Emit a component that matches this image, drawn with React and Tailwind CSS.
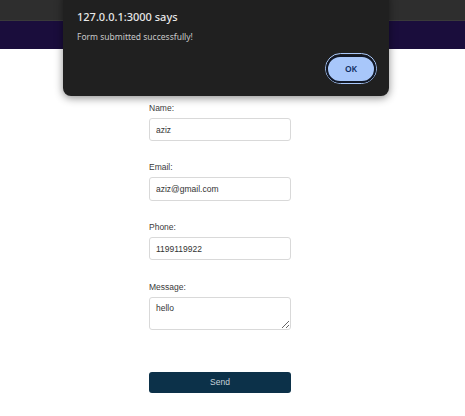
export default function App() {
  const label = "block text-[8.5px] leading-[12px] text-[#3a3a3a] mb-[4px]";
  const input =
    "block w-[142px] h-[23px] rounded-[3px] border border-[#d9d9d9] bg-white px-[6px] text-[8.5px] text-[#333] outline-none";
  return (
    <div
      className="relative w-[465px] h-[416px] bg-white overflow-hidden"
      style={{ fontFamily: '"Liberation Sans", Arial, sans-serif' }}
    >
      <div className="h-[21px] bg-[#2e2e2e] border-b border-[#3a3a3a]" />
      <div className="h-[28px] bg-[#1a0d3c]" />

      <form className="ml-[149px] w-[142px] pt-[53px]" onSubmit={(e) => e.preventDefault()}>
        <div>
          <label className={label}>Name:</label>
          <input className={input} defaultValue="aziz" />
        </div>
        <div className="mt-[20px]">
          <label className={label}>Email:</label>
          <input className={input + " h-[24px]"} defaultValue="aziz@gmail.com" />
        </div>
        <div className="mt-[20px]">
          <label className={label}>Phone:</label>
          <input className={input} defaultValue="1199119922" />
        </div>
        <div className="mt-[21px]">
          <label className={label}>Message:</label>
          <textarea
            className="block w-[142px] h-[33px] rounded-[3px] border border-[#d9d9d9] bg-white px-[6px] py-[4px] text-[8.5px] text-[#333] outline-none resize-y leading-[12px]"
            defaultValue="hello"
          />
        </div>
        <button
          type="submit"
          className="mt-[42px] block w-[142px] h-[21px] rounded-[3px] bg-[#0c3149] text-[#c9d3da] text-[8.5px]"
        >
          Send
        </button>
      </form>

      <div
        className="absolute left-[63px] top-[-10px] w-[326px] h-[106px] rounded-[8px] bg-[#202020] shadow-[0_2px_8px_rgba(0,0,0,0.45)]"
        style={{ fontFamily: '"Noto Sans", "Open Sans", sans-serif' }}
      >
        <div className="pl-[14px] pt-[20px] text-[11px] leading-[14px] font-medium text-[#e8e8e8]">
          127.0.0.1:3000 says
        </div>
        <div className="pl-[14px] pt-[7px] text-[8.5px] leading-[12px] text-[#c8c8c8]">
          Form submitted successfully!
        </div>
        <div className="flex justify-end pr-[12px] pt-[10px]">
          <div className="rounded-full border border-[#a8c7fa]">
            <button className="w-[50px] h-[28px] rounded-full bg-[#a8c7fa] border-2 border-[#111827] text-[8.5px] font-semibold text-[#0b2a5e]">
              OK
            </button>
          </div>
        </div>
      </div>
    </div>
  );
}
